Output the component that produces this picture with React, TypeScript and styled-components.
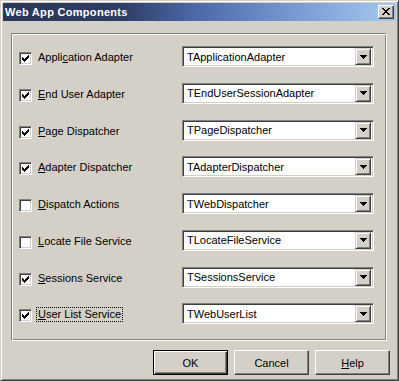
import React from 'react';
import styled, { createGlobalStyle } from 'styled-components';

const GlobalStyle = createGlobalStyle`
  html, body {
    margin: 0;
    padding: 0;
    background: #d4d0c8;
  }
  * { box-sizing: border-box; }
`;

const rows = [
  { label: 'Application Adapter', key: 5, value: 'TApplicationAdapter', checked: true },
  { label: 'End User Adapter', key: 0, value: 'TEndUserSessionAdapter', checked: true },
  { label: 'Page Dispatcher', key: 0, value: 'TPageDispatcher', checked: true },
  { label: 'Adapter Dispatcher', key: 0, value: 'TAdapterDispatcher', checked: true },
  { label: 'Dispatch Actions', key: 0, value: 'TWebDispatcher', checked: false },
  { label: 'Locate File Service', key: 0, value: 'TLocateFileService', checked: false },
  { label: 'Sessions Service', key: 0, value: 'TSessionsService', checked: true },
  { label: 'User List Service', key: 0, value: 'TWebUserList', checked: true, focused: true },
];

/* ─── window frame ─── */
const Window = styled.div`
  width: 399px;
  height: 381px;
  background: #d4d0c8;
  border: 1px solid;
  border-color: #d4d0c8 #404040 #404040 #d4d0c8;
  box-shadow: inset 1px 1px #ffffff, inset -1px -1px #808080;
  padding: 2px;
  display: flex;
  flex-direction: column;
  font-family: 'Liberation Sans', Arial, sans-serif;
  font-size: 11px;
  color: #000;
`;

const TitleBar = styled.div`
  height: 18px;
  display: flex;
  align-items: center;
  justify-content: space-between;
  padding: 0 2px 0 2px;
  background: linear-gradient(to right, #2a375a 0%, #2f3c62 30%, #4a66a6 48%, #6f92cc 70%, #a6caf0 100%);
`;

const TitleText = styled.span`
  color: #fff;
  font-family: 'Liberation Sans', Arial, sans-serif;
  font-weight: bold;
  font-size: 11px;
  letter-spacing: 0.3px;
`;

const CloseButton = styled.div`
  width: 16px;
  height: 14px;
  background: #d4d0c8;
  border: 1px solid;
  border-color: #ffffff #404040 #404040 #ffffff;
  box-shadow: inset -1px -1px #808080;
  display: flex;
  align-items: center;
  justify-content: center;
  padding: 0 1px 1px 0;
`;

const Body = styled.div`
  display: flex;
  flex-direction: column;
  padding: 12px 6px 0 8px;
`;

/* ─── group box ─── */
const GroupBox = styled.div`
  width: 376px;
  height: 308px;
  border: 1px solid;
  border-color: #808080 #ffffff #ffffff #808080;
  box-shadow: inset 1px 1px #ffffff, inset -1px -1px #808080;
  padding: 12px 0 0 7px;
  display: flex;
  flex-direction: column;
`;

const Row = styled.div`
  height: 37px;
  display: grid;
  grid-template-columns: 163px 192px;
  align-items: start;
`;

const CheckCell = styled.div`
  display: flex;
  align-items: center;
  gap: 4px;
  margin-top: 6px;
`;

const CheckBox = styled.div`
  width: 13px;
  height: 13px;
  background: #fff;
  border: 1px solid;
  border-color: #808080 #ffffff #ffffff #808080;
  box-shadow: inset 1px 1px #404040, inset -1px -1px #d4d0c8;
  display: flex;
  align-items: center;
  justify-content: center;
`;

const Label = styled.span<{ $focused?: boolean }>`
  padding: 0 1px;
  margin-top: -2px;
  line-height: 13px;
  border: 1px dotted ${(p) => (p.$focused ? '#000' : 'transparent')};
  white-space: nowrap;
`;

const Key = styled.span`
  text-decoration: underline;
`;

/* ─── combo box ─── */
const Combo = styled.div`
  height: 21px;
  background: #fff;
  border: 1px solid;
  border-color: #808080 #ffffff #ffffff #808080;
  box-shadow: inset 1px 1px #404040, inset -1px -1px #d4d0c8;
  padding: 2px 2px 2px 4px;
  display: flex;
  align-items: center;
  justify-content: space-between;
`;

const ComboText = styled.span`
  line-height: 17px;
  padding-top: 1px;
  white-space: nowrap;
`;

const DropButton = styled.div`
  width: 16px;
  height: 17px;
  background: #d4d0c8;
  border: 1px solid;
  border-color: #d4d0c8 #404040 #404040 #d4d0c8;
  box-shadow: inset 1px 1px #ffffff, inset -1px -1px #808080;
  display: flex;
  align-items: center;
  justify-content: center;
`;

/* ─── buttons ─── */
const ButtonRow = styled.div`
  display: flex;
  justify-content: flex-end;
  gap: 6px;
  margin-top: 9px;
`;

const Button = styled.div<{ $default?: boolean }>`
  width: 75px;
  height: 25px;
  display: flex;
  align-items: center;
  justify-content: center;
  background: #d4d0c8;
  border: 1px solid;
  border-color: ${(p) => (p.$default ? '#000' : '#ffffff #404040 #404040 #ffffff')};
  box-shadow: ${(p) =>
    p.$default
      ? 'inset 1px 1px #ffffff, inset -1px -1px #404040, inset -2px -2px #808080'
      : 'inset -1px -1px #808080'};
`;

function Underlined({ text, at }: { text: string; at: number }) {
  return (
    <>
      {text.slice(0, at)}
      <Key>{text[at]}</Key>
      {text.slice(at + 1)}
    </>
  );
}

function CheckMark() {
  // classic 7x7 pixel tick
  const px: [number, number, number][] = [
    [6, 0, 1], [5, 1, 2], [0, 2, 1], [4, 2, 3], [0, 3, 2], [3, 3, 3],
    [0, 4, 5], [1, 5, 3], [2, 6, 1],
  ];
  return (
    <svg width="7" height="7" viewBox="0 0 7 7" shapeRendering="crispEdges">
      {px.map(([x, y, w], i) => (
        <rect key={i} x={x} y={y} width={w} height={1} fill="#000" />
      ))}
    </svg>
  );
}

function DownArrow() {
  return (
    <svg width="7" height="4" viewBox="0 0 7 4" shapeRendering="crispEdges">
      <rect x={0} y={0} width={7} height={1} fill="#000" />
      <rect x={1} y={1} width={5} height={1} fill="#000" />
      <rect x={2} y={2} width={3} height={1} fill="#000" />
      <rect x={3} y={3} width={1} height={1} fill="#000" />
    </svg>
  );
}

function CloseGlyph() {
  const px: [number, number, number][] = [
    [0, 0, 2], [6, 0, 2], [1, 1, 2], [5, 1, 2], [2, 2, 4], [3, 3, 2],
    [2, 4, 4], [1, 5, 2], [5, 5, 2], [0, 6, 2], [6, 6, 2],
  ];
  return (
    <svg width="8" height="7" viewBox="0 0 8 7" shapeRendering="crispEdges">
      {px.map(([x, y, w], i) => (
        <rect key={i} x={x} y={y} width={w} height={1} fill="#000" />
      ))}
    </svg>
  );
}

export default function App() {
  return (
    <>
      <GlobalStyle />
      <Window>
        <TitleBar>
          <TitleText>Web App Components</TitleText>
          <CloseButton>
            <CloseGlyph />
          </CloseButton>
        </TitleBar>
        <Body>
          <GroupBox>
            {rows.map((r) => (
              <Row key={r.label}>
                <CheckCell>
                  <CheckBox>{r.checked && <CheckMark />}</CheckBox>
                  <Label $focused={r.focused}>
                    <Underlined text={r.label} at={r.key} />
                  </Label>
                </CheckCell>
                <Combo>
                  <ComboText>{r.value}</ComboText>
                  <DropButton>
                    <DownArrow />
                  </DropButton>
                </Combo>
              </Row>
            ))}
          </GroupBox>
          <ButtonRow>
            <Button $default>OK</Button>
            <Button>Cancel</Button>
            <Button>
              <Underlined text="Help" at={0} />
            </Button>
          </ButtonRow>
        </Body>
      </Window>
    </>
  );
}
